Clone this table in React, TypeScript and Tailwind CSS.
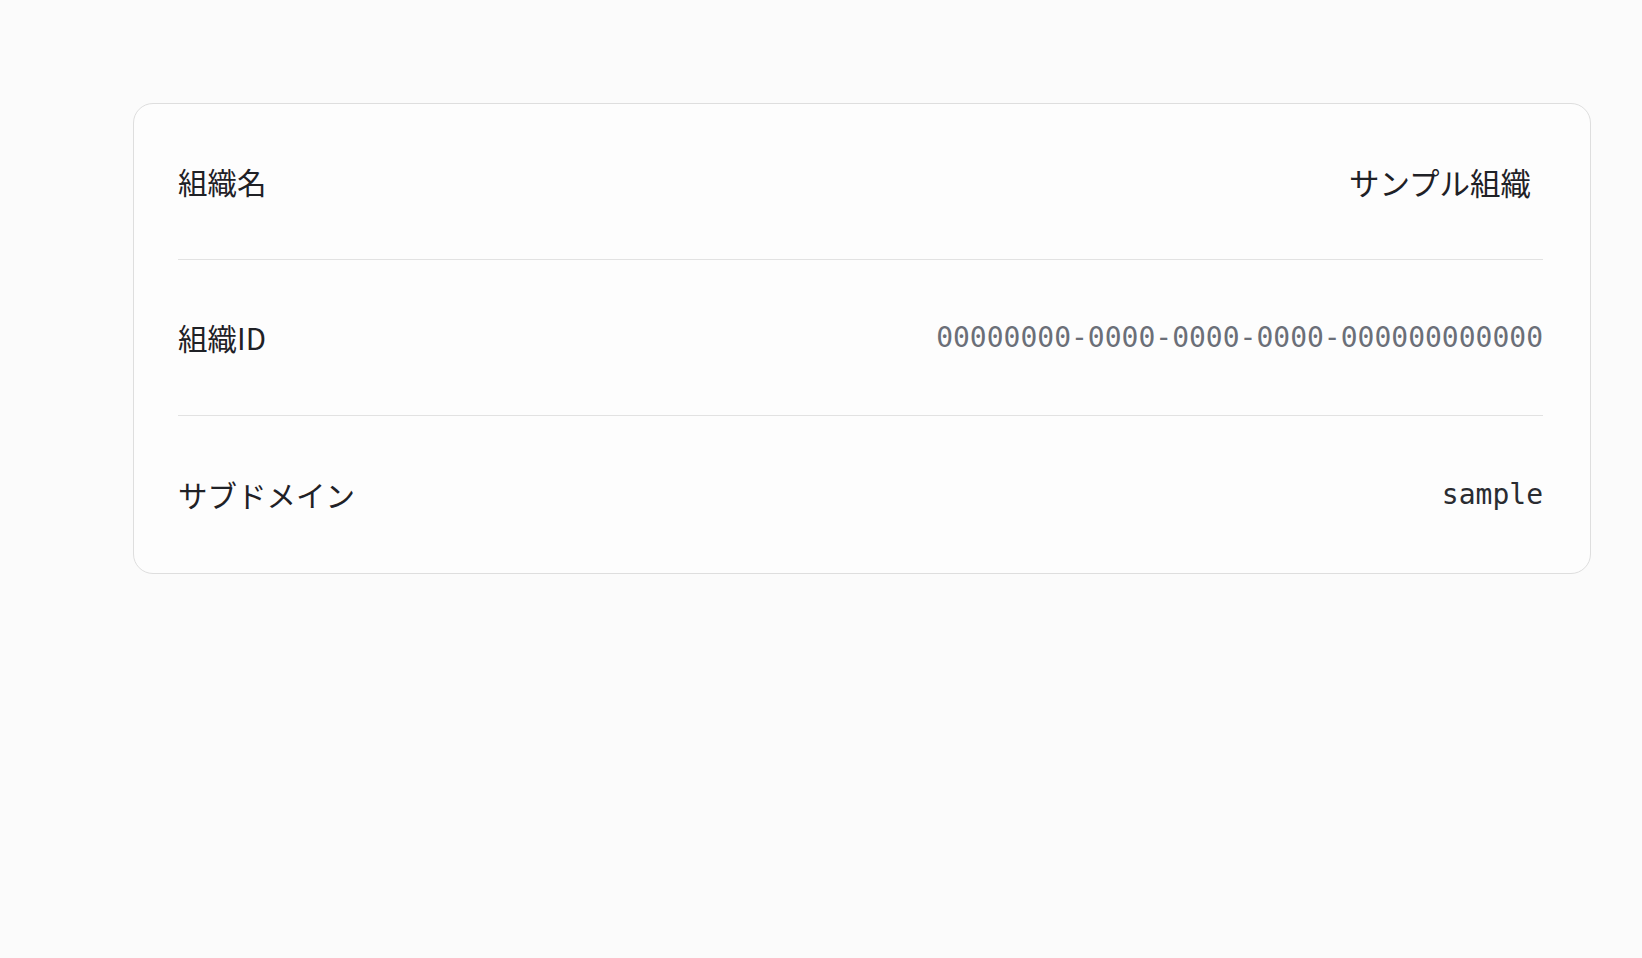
import React from "react";

const rows = [
  { label: "組織名", value: "サンプル組織", kind: "text" },
  { label: "組織ID", value: "00000000-0000-0000-0000-000000000000", kind: "id" },
  { label: "サブドメイン", value: "sample", kind: "mono" },
];

export default function App() {
  return (
    <div
      className="min-h-[958px] w-full bg-[#fbfbfb] pt-[103px] pl-[133px] pr-[51px]"
      style={{ fontFamily: '"Noto Sans CJK JP", "Noto Sans", sans-serif' }}
    >
      <div className="w-[1458px] rounded-[20px] border border-[#dedede] bg-[#fdfdfd] pl-[44px] pr-[47px]">
        {rows.map((r, i) => (
          <div
            key={r.label}
            className={
              i < rows.length - 1
                ? "flex h-[156px] items-center justify-between border-b border-[#e2e2e2] pt-[1px]"
                : "flex h-[157px] items-center justify-between pt-[1px]"
            }
          >
            <span className="text-[29.5px] leading-none text-[#1f2126]">{r.label}</span>
            {r.kind === "text" && (
              <span className="mr-[12px] text-[30.5px] leading-none text-[#1f2126]">{r.value}</span>
            )}
            {r.kind === "id" && (
              <span className="font-['DejaVu_Sans_Mono',monospace] text-[28px] leading-none text-[#6b6f78]">
                {r.value}
              </span>
            )}
            {r.kind === "mono" && (
              <span className="font-['DejaVu_Sans_Mono',monospace] text-[28px] leading-none text-[#2a2c31]">
                {r.value}
              </span>
            )}
          </div>
        ))}
      </div>
    </div>
  );
}
